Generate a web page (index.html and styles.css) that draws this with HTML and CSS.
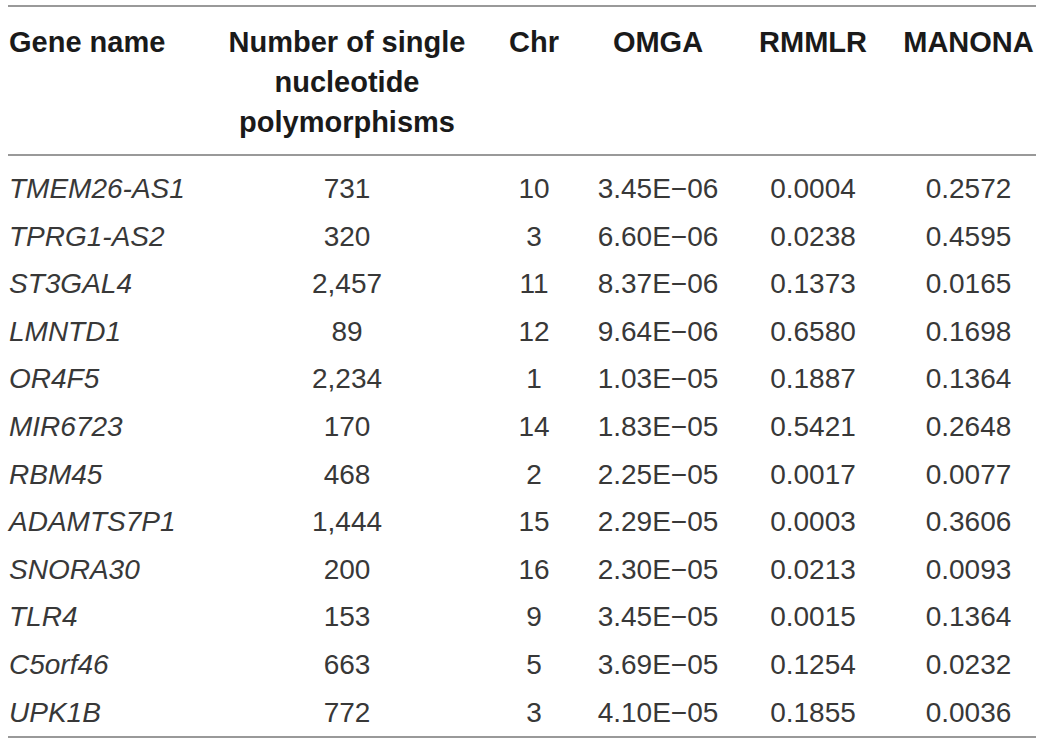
FILE: index.html
```html
<!DOCTYPE html>
<html lang="en">
<head>
    <meta charset="UTF-8">
    <meta name="viewport" content="width=device-width, initial-scale=1.0">
    <title>Gene table</title>
    <link rel="stylesheet" href="styles.css">
</head>
<body>
    <div class="wrap">
        <table class="genes">
            <thead>
                <tr>
                    <th class="c-gene">Gene name</th>
                    <th class="c-snp">Number of single nucleotide polymorphisms</th>
                    <th class="c-chr">Chr</th>
                    <th class="c-omga">OMGA</th>
                    <th class="c-rmmlr">RMMLR</th>
                    <th class="c-manona">MANONA</th>
                </tr>
            </thead>
            <tbody>
                <tr><td class="c-gene">TMEM26-AS1</td><td>731</td><td>10</td><td>3.45E&minus;06</td><td>0.0004</td><td class="c-manona">0.2572</td></tr>
                <tr><td class="c-gene">TPRG1-AS2</td><td>320</td><td>3</td><td>6.60E&minus;06</td><td>0.0238</td><td class="c-manona">0.4595</td></tr>
                <tr><td class="c-gene">ST3GAL4</td><td>2,457</td><td>11</td><td>8.37E&minus;06</td><td>0.1373</td><td class="c-manona">0.0165</td></tr>
                <tr><td class="c-gene">LMNTD1</td><td>89</td><td>12</td><td>9.64E&minus;06</td><td>0.6580</td><td class="c-manona">0.1698</td></tr>
                <tr><td class="c-gene">OR4F5</td><td>2,234</td><td>1</td><td>1.03E&minus;05</td><td>0.1887</td><td class="c-manona">0.1364</td></tr>
                <tr><td class="c-gene">MIR6723</td><td>170</td><td>14</td><td>1.83E&minus;05</td><td>0.5421</td><td class="c-manona">0.2648</td></tr>
                <tr><td class="c-gene">RBM45</td><td>468</td><td>2</td><td>2.25E&minus;05</td><td>0.0017</td><td class="c-manona">0.0077</td></tr>
                <tr><td class="c-gene">ADAMTS7P1</td><td>1,444</td><td>15</td><td>2.29E&minus;05</td><td>0.0003</td><td class="c-manona">0.3606</td></tr>
                <tr><td class="c-gene">SNORA30</td><td>200</td><td>16</td><td>2.30E&minus;05</td><td>0.0213</td><td class="c-manona">0.0093</td></tr>
                <tr><td class="c-gene">TLR4</td><td>153</td><td>9</td><td>3.45E&minus;05</td><td>0.0015</td><td class="c-manona">0.1364</td></tr>
                <tr><td class="c-gene">C5orf46</td><td>663</td><td>5</td><td>3.69E&minus;05</td><td>0.1254</td><td class="c-manona">0.0232</td></tr>
                <tr><td class="c-gene">UPK1B</td><td>772</td><td>3</td><td>4.10E&minus;05</td><td>0.1855</td><td class="c-manona">0.0036</td></tr>
            </tbody>
        </table>
    </div>
</body>
</html>
```

FILE: styles.css
```css
body {
    margin: 0;
    background-color: #fff;
    font-family: "Liberation Sans", Arial, sans-serif;
    color: #222;
}

.wrap {
    padding: 5px 6px 0 8px;
}

.genes {
    width: 1028px;
    border-collapse: collapse;
    table-layout: fixed;
    border-top: 2px solid #999;
    border-bottom: 2px solid #999;
}

.genes th {
    font-size: 29px;
    font-weight: bold;
    line-height: 40px;
    text-align: center;
    vertical-align: top;
    padding: 15px 0 12px;
    border-bottom: 2px solid #999;
    color: #1a1a1a;
}

.genes td {
    font-size: 28px;
    line-height: 33.6px;
    text-align: center;
    padding: 7px 0;
    color: #383838;
}

.genes tbody tr:first-child td {
    padding-top: 16px;
}

.genes tbody tr:last-child td {
    padding-bottom: 7px;
}

.genes .c-gene {
    width: 204px;
    text-align: left;
    padding-left: 1px;
}

.genes td.c-gene {
    font-style: italic;
}

.genes .c-snp {
    width: 268px;
}

.genes .c-chr {
    width: 106px;
}

.genes .c-omga {
    width: 142px;
}

.genes .c-rmmlr {
    width: 168px;
}

.genes .c-manona {
    padding-left: 4px;
}
```
